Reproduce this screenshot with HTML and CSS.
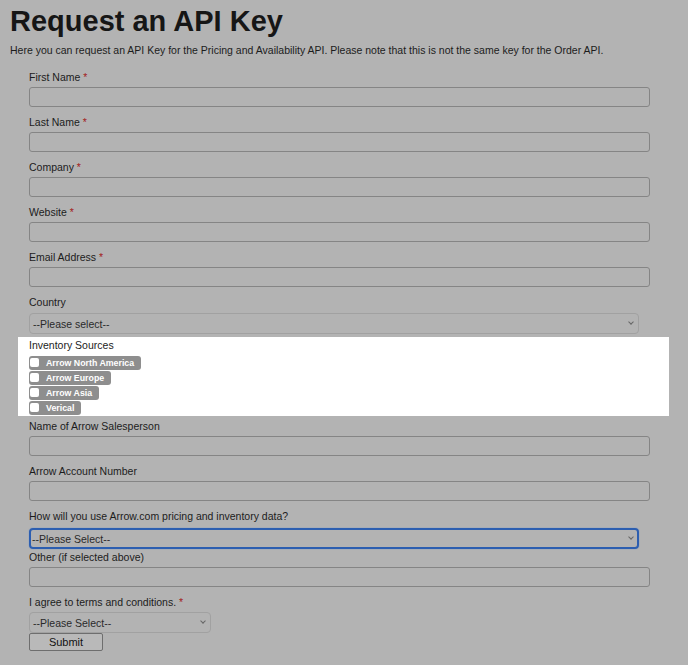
FILE: index.html
```html
<!DOCTYPE html>
<html lang="en">
<head>
	<meta charset="UTF-8">
	<title>Request an API Key</title>
	<link rel="stylesheet" href="styles.css">
</head>
<body>

<div class="page">
	<h1>Request an API Key</h1>
	<p class="intro">Here you can request an API Key for the Pricing and Availability API. Please note that this is not the same key for the Order API.</p>

	<form class="key_form">
		<div class="field">
			<label>First Name <span class="req">*</span></label>
			<input type="text" class="txt">
		</div>
		<div class="field">
			<label>Last Name <span class="req">*</span></label>
			<input type="text" class="txt">
		</div>
		<div class="field">
			<label>Company <span class="req">*</span></label>
			<input type="text" class="txt">
		</div>
		<div class="field">
			<label>Website <span class="req">*</span></label>
			<input type="text" class="txt">
		</div>
		<div class="field">
			<label>Email Address <span class="req">*</span></label>
			<input type="text" class="txt">
		</div>
		<div class="field field_sel">
			<label>Country</label>
			<div class="sel wide">
				<select><option>--Please select--</option></select>
				<span class="chev"></span>
			</div>
		</div>

		<div class="sources">
			<label>Inventory Sources</label>
			<ul class="src_list">
				<li><span class="badge"><i class="box"></i>Arrow North America</span></li>
				<li><span class="badge"><i class="box"></i>Arrow Europe</span></li>
				<li><span class="badge"><i class="box"></i>Arrow Asia</span></li>
				<li><span class="badge"><i class="box"></i>Verical</span></li>
			</ul>
		</div>

		<div class="field after_src">
			<label>Name of Arrow Salesperson</label>
			<input type="text" class="txt">
		</div>
		<div class="field">
			<label>Arrow Account Number</label>
			<input type="text" class="txt">
		</div>
		<div class="field field_sel">
			<label>How will you use Arrow.com pricing and inventory data?</label>
			<div class="sel wide focus">
				<select><option>--Please Select--</option></select>
				<span class="chev"></span>
			</div>
		</div>
		<div class="field">
			<label>Other (if selected above)</label>
			<input type="text" class="txt">
		</div>
		<div class="field field_sel">
			<label>I agree to terms and conditions. <span class="req">*</span></label>
			<div class="sel short">
				<select><option>--Please Select--</option></select>
				<span class="chev"></span>
			</div>
		</div>
		<button type="button" class="submit">Submit</button>
	</form>
</div>

</body>
</html>
```

FILE: styles.css
```css
*{
	margin: 0;
	padding: 0;
	box-sizing: border-box;
}
li{
	list-style: none;
}
body{
	background: #b3b3b3;
	color: #1c1c1c;
	font-family: "Liberation Sans", Arial, sans-serif;
}

.page{
	padding: 5px 10px 0 10px;
}
h1{
	font-size: 29px;
	line-height: 32px;
	font-weight: bold;
	color: #161616;
}
.intro{
	font-size: 10.5px;
	line-height: 14px;
	margin-top: 6px;
}

.key_form{
	padding: 12px 28px 0 19px;
}
.field label,
.sources label{
	display: block;
	font-size: 10.5px;
	line-height: 16px;
}
.req{
	color: #a3201c;
}
.txt{
	display: block;
	width: 100%;
	height: 20px;
	margin-top: 2px;
	margin-bottom: 7px;
	background: #b3b3b3;
	border: 1px solid #858585;
	border-radius: 3px;
	outline: none;
}

/* selects */
.sel{
	position: relative;
	margin-top: 3px;
}
.sel select{
	display: block;
	width: 100%;
	height: 21px;
	-webkit-appearance: none;
	appearance: none;
	background: #b3b3b3;
	border: 1px solid #a1a1a1;
	border-radius: 4px;
	padding: 0 3px;
	font-family: "Liberation Sans", Arial, sans-serif;
	font-size: 10.5px;
	color: #2a2a2a;
	outline: none;
}
.sel.wide{
	width: 610px;
}
.sel.short{
	width: 182px;
	margin-top: 2px;
}
.sel.focus{
	margin-top: 4px;
}
.sel.focus select{
	border: 2px solid #2c5eb0;
	box-shadow: 0 0 0 1px #a6adb8;
	padding: 0 1px;
}
.chev{
	position: absolute;
	right: 6px;
	top: 7px;
	width: 4px;
	height: 4px;
	border-right: 1px solid #666;
	border-bottom: 1px solid #666;
	transform: rotate(45deg);
}

/* highlighted block */
.sources{
	background: #fff;
	margin: 3px -19px 0 -11px;
	padding: 0 19px 3px 11px;
}
.src_list li{
	height: 15px;
}
.badge{
	display: inline-flex;
	align-items: center;
	height: 14px;
	padding: 0 7px 0 1px;
	background: #8e8e8e;
	border-radius: 3px;
	color: #fff;
	font-size: 8.8px;
	font-weight: bold;
}
.box{
	display: inline-block;
	width: 9px;
	height: 9px;
	margin-right: 7px;
	background: #fff;
	border-radius: 2px;
}
.after_src{
	margin-top: 2px;
}

.submit{
	display: block;
	width: 74px;
	height: 18px;
	background: #b9b9b9;
	border: 1px solid #6e6e6e;
	border-radius: 2px;
	font-family: "Liberation Sans", Arial, sans-serif;
	font-size: 11px;
	color: #111;
}
```
